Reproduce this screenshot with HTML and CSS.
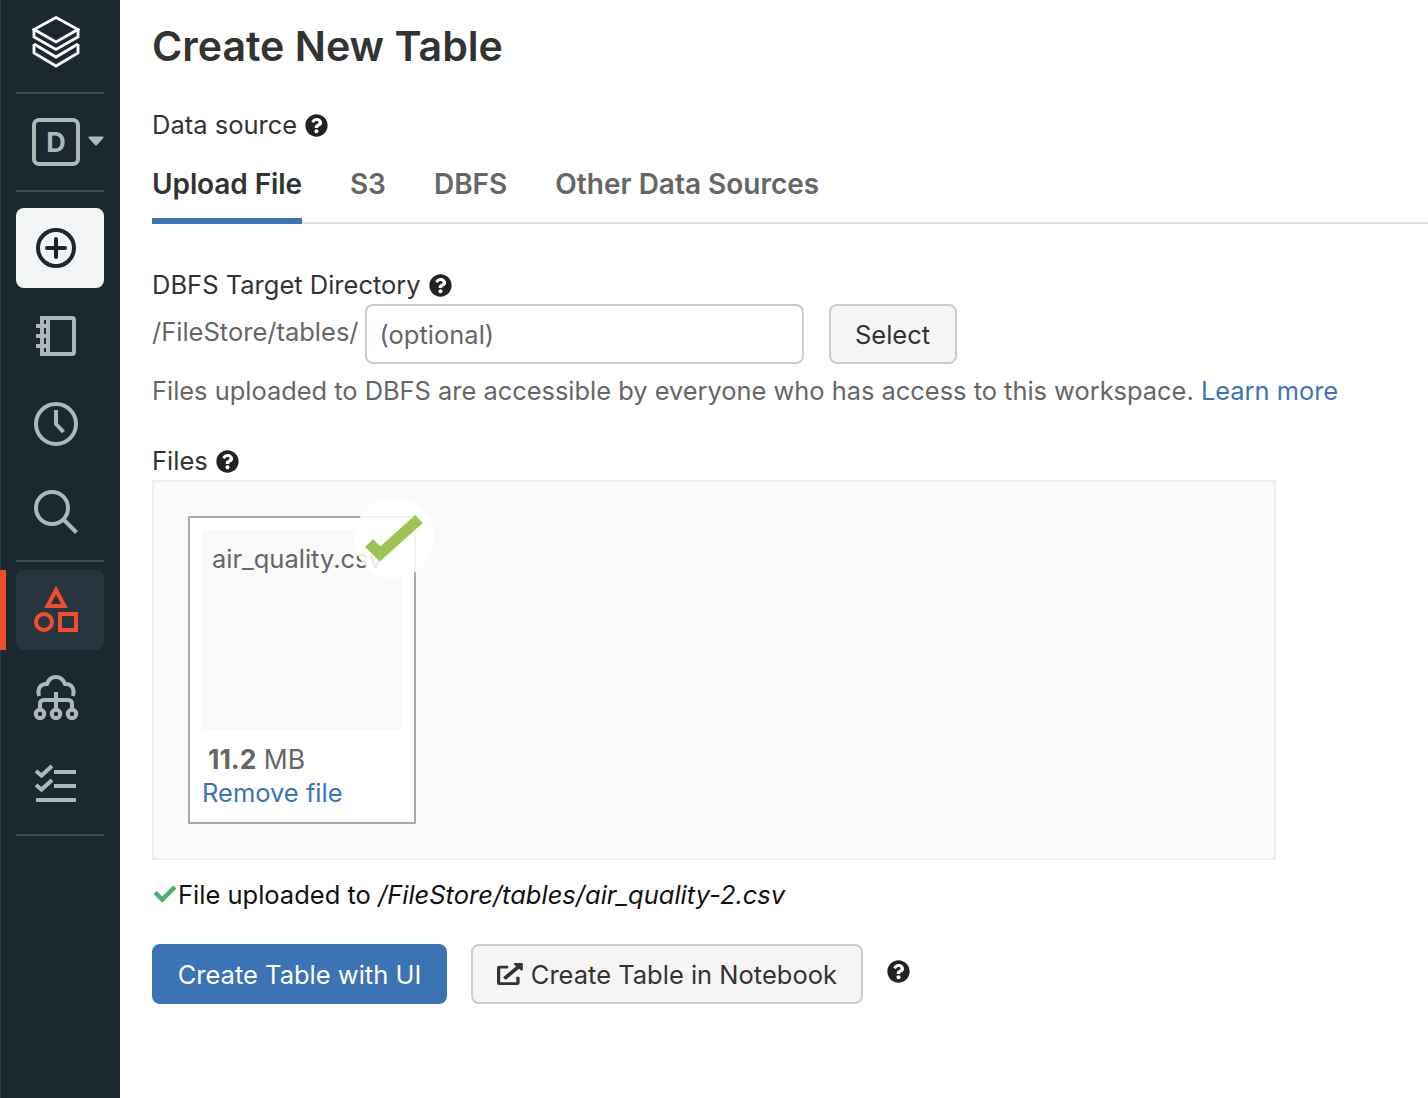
FILE: index.html
```html
<!DOCTYPE html>
<html lang="en">
<head>
  <meta charset="UTF-8">
  <meta name="viewport" content="width=device-width, initial-scale=1.0">
  <title>Create New Table</title>
  <link rel="stylesheet" href="styles.css">
</head>
<body>
  <nav class="sidebar">
    <div class="logo">
      <svg width="48" height="52" viewBox="0 0 48 52" fill="none" stroke="#fff" stroke-width="2.8">
        <path d="M24 1.5 L46 13.5 L24 26 L2 13.5 Z"/>
        <path d="M2 13.5 V21 L24 33.5 L46 21 V13.5"/>
        <path d="M2 28 L24 41 L46 28"/>
        <path d="M2 28 V37 L24 50 L46 37 V28"/>
      </svg>
    </div>
    <div class="divider"></div>
    <div class="workspace">
      <span class="workspace-badge">D</span>
      <svg class="caret" width="16" height="10" viewBox="0 0 16 10" fill="#adb8bd" stroke="#adb8bd" stroke-width="2" stroke-linejoin="round">
        <path d="M1.5 1.5 H14.5 L8 8.5 Z"/>
      </svg>
    </div>
    <div class="divider"></div>
    <div class="nav-item create">
      <svg width="48" height="48" viewBox="0 0 48 48" fill="none" stroke="#1b2830" stroke-width="4">
        <circle cx="24" cy="24" r="18"/>
        <path d="M24 15 V33 M15 24 H33" stroke-linecap="round"/>
      </svg>
    </div>
    <div class="nav-item">
      <svg width="48" height="48" viewBox="0 0 48 48" fill="none" stroke="#adb8bd" stroke-width="4">
        <path d="M10 6 H40 a2 2 0 0 1 2 2 V40 a2 2 0 0 1 -2 2 H10 Z"/>
        <path d="M16 6 V42"/>
        <path d="M4 14 H16 M4 24 H16 M4 34 H16"/>
      </svg>
    </div>
    <div class="nav-item">
      <svg width="48" height="48" viewBox="0 0 48 48" fill="none" stroke="#adb8bd" stroke-width="4">
        <circle cx="24" cy="24" r="20"/>
        <path d="M24 10 V24 L31.5 32"/>
      </svg>
    </div>
    <div class="nav-item">
      <svg width="48" height="48" viewBox="0 0 48 48" fill="none" stroke="#adb8bd" stroke-width="4">
        <circle cx="20" cy="20" r="16"/>
        <path d="M31.5 31.5 L44.5 44.5"/>
      </svg>
    </div>
    <div class="divider tight"></div>
    <div class="nav-item active">
      <svg width="48" height="48" viewBox="0 0 48 48" fill="none" stroke="#f04e2f" stroke-width="4">
        <path d="M24 4 L32.5 20 H15.5 Z"/>
        <circle cx="12" cy="36" r="8"/>
        <rect x="28" y="28" width="16" height="16"/>
      </svg>
    </div>
    <div class="nav-item">
      <svg width="48" height="48" viewBox="0 0 48 48" fill="none" stroke="#adb8bd" stroke-width="4">
        <path d="M7 22 C5 14 9 9.5 15 10 C17 4 21 3 24 3 C28 3 31 5 33 10 C39 9.5 43 14 41 22"/>
        <path d="M24 18 V34 M8 34 V30 Q8 26 12 26 H36 Q40 26 40 30 V34"/>
        <circle cx="8" cy="40" r="4.2"/>
        <circle cx="24" cy="40" r="4.2"/>
        <circle cx="40" cy="40" r="4.2"/>
      </svg>
    </div>
    <div class="nav-item">
      <svg width="48" height="48" viewBox="0 0 48 48" fill="none" stroke="#adb8bd" stroke-width="4">
        <path d="M4 9 L9.5 13.5 L20 4"/>
        <path d="M4 23 L9.5 27.5 L20 18"/>
        <path d="M22 10 H44 M22 24 H44 M4 38 H44"/>
      </svg>
    </div>
    <div class="divider tight"></div>
    <span class="active-bar"></span>
  </nav>

  <main class="content">
    <h1>Create New Table</h1>

    <div class="field-label source-label">Data source
      <svg class="help" viewBox="0 0 512 512"><use href="#help-icon"/></svg>
    </div>

    <div class="tabs">
      <a class="tab selected">Upload File</a>
      <a class="tab">S3</a>
      <a class="tab">DBFS</a>
      <a class="tab">Other Data Sources</a>
    </div>

    <div class="field-label target-label">DBFS Target Directory
      <svg class="help" viewBox="0 0 512 512"><use href="#help-icon"/></svg>
    </div>
    <div class="target-row">
      <span class="path-prefix">/FileStore/tables/</span>
      <input class="path-input" type="text" placeholder="(optional)">
      <button class="btn select-btn">Select</button>
    </div>
    <p class="note">Files uploaded to DBFS are accessible by everyone who has access to this workspace. <a href="#">Learn more</a></p>

    <div class="field-label files-label">Files
      <svg class="help" viewBox="0 0 512 512"><use href="#help-icon"/></svg>
    </div>
    <div class="dropzone">
      <div class="preview">
        <div class="thumb">air_quality.csv</div>
        <div class="size"><b>11.2</b> MB</div>
        <a class="remove" href="#">Remove file</a>
        <div class="tick">
          <svg width="60" height="48" viewBox="0 0 60 48" fill="none" stroke="#9bc553" stroke-width="11">
            <path d="M5 29 L16 40 L55 5"/>
          </svg>
        </div>
      </div>
    </div>

    <div class="success">
      <svg width="22" height="22" viewBox="0 0 512 512" fill="#4fae72">
        <path d="M173.898 439.404l-166.4-166.4c-9.997-9.997-9.997-26.206 0-36.204l36.203-36.204c9.997-9.998 26.207-9.998 36.204 0L192 312.69 432.095 72.596c9.997-9.997 26.207-9.997 36.204 0l36.203 36.204c9.997 9.997 9.997 26.206 0 36.204l-294.4 294.401c-9.998 9.997-26.207 9.997-36.204-.001z"/>
      </svg>
      <span>File uploaded to <em>/FileStore/tables/air_quality-2.csv</em></span>
    </div>

    <div class="actions">
      <button class="btn primary">Create Table with UI</button>
      <button class="btn notebook">
        <svg width="26" height="22" viewBox="0 0 512 512" preserveAspectRatio="none" fill="#333">
          <path d="M432,320H400a16,16,0,0,0-16,16V448H64V128H208a16,16,0,0,0,16-16V80a16,16,0,0,0-16-16H48A48,48,0,0,0,0,112V464a48,48,0,0,0,48,48H400a48,48,0,0,0,48-48V336A16,16,0,0,0,432,320ZM488,0h-128c-21.37,0-32.05,25.91-17,41l35.73,35.73L135,320.37a24,24,0,0,0,0,34L157.67,377a24,24,0,0,0,34,0L435.28,133.32,471,169c15,15,41,4.5,41-17V24A24,24,0,0,0,488,0Z"/>
        </svg>
        <span>Create Table in Notebook</span>
      </button>
      <svg class="help action-help" viewBox="0 0 512 512"><use href="#help-icon"/></svg>
    </div>
  </main>

  <svg class="defs" width="0" height="0">
    <symbol id="help-icon" viewBox="0 0 512 512">
      <path fill="#222" d="M504 256c0 136.997-111.043 248-248 248S8 392.997 8 256C8 119.083 119.043 8 256 8s248 111.083 248 248zM262.655 90c-54.497 0-89.255 22.957-116.549 63.758-3.536 5.286-2.353 12.415 2.715 16.258l34.699 26.31c5.205 3.947 12.621 3.008 16.665-2.122 17.864-22.658 30.113-35.797 57.303-35.797 20.429 0 45.698 13.148 45.698 32.958 0 14.976-12.363 22.667-32.534 33.976C247.128 238.528 216 254.941 216 296v4c0 6.627 5.373 12 12 12h56c6.627 0 12-5.373 12-12v-1.333c0-28.462 83.186-29.647 83.186-106.667 0-58.002-60.165-102-116.531-102zM256 338c-25.365 0-46 20.635-46 46 0 25.364 20.635 46 46 46s46-20.636 46-46c0-25.365-20.635-46-46-46z"/>
    </symbol>
  </svg>
</body>
</html>
```

FILE: styles.css
```css
* {
  box-sizing: border-box;
}

body {
  font-family: Inter, "Noto Sans", sans-serif;
  font-size: 25.5px;
  color: #333;
  background-color: #fff;
  margin: 0;
  display: flex;
  min-height: 1098px;
  overflow: hidden;
}

a {
  color: #3b73b5;
  text-decoration: none;
}

.defs {
  position: absolute;
}

/* left nav */
.sidebar {
  position: relative;
  flex: 0 0 120px;
  width: 120px;
  background-color: #1b2830;
  border-left: 1px solid #2b3b43;
  padding: 16px 16px 0 15px;
}

.logo {
  height: 52px;
  padding-left: 16px;
}

.logo svg {
  display: block;
}

.divider {
  height: 2px;
  background-color: #3c4a52;
  margin: 24px 0 0;
}

.divider.tight {
  margin: 0;
}

.workspace {
  display: flex;
  align-items: center;
  height: 96px;
  padding-left: 16px;
}

.workspace-badge {
  width: 48px;
  height: 48px;
  border: 4px solid #adb8bd;
  border-radius: 7px;
  color: #adb8bd;
  font-size: 27px;
  font-weight: 700;
  display: flex;
  align-items: center;
  justify-content: center;
}

.caret {
  margin-left: 8px;
  margin-top: -2px;
}

.workspace + .divider {
  margin: 0 0 16px;
}

.nav-item {
  height: 80px;
  margin-bottom: 8px;
  padding-left: 16px;
  border-radius: 8px;
  display: flex;
  align-items: center;
}

.nav-item.create {
  background-color: #f4f5f7;
}

.nav-item.active {
  background-color: #27353f;
}

.divider.tight + .nav-item {
  margin-top: 8px;
}

.active-bar {
  position: absolute;
  left: -1px;
  top: 570px;
  width: 6px;
  height: 80px;
  background-color: #f04e2f;
}

/* main panel */
.content {
  flex: 1;
  padding-left: 32px;
  min-width: 0;
}

h1 {
  font-size: 41.1px;
  font-weight: 600;
  line-height: 50px;
  color: #333;
  margin: 21px 0 0;
}

.field-label {
  height: 32px;
  line-height: 32px;
  display: flex;
  align-items: center;
  gap: 8px;
}

.source-label {
  margin-top: 38px;
}

.help {
  width: 23px;
  height: 23px;
}

.tabs {
  display: flex;
  gap: 48px;
  height: 76px;
  margin-top: 7px;
  border-bottom: 2px solid #dfe1e3;
}

.tab {
  font-size: 28px;
  font-weight: 600;
  color: #666;
  height: 76px;
  line-height: 72px;
  border-bottom: 6px solid transparent;
}

.tab.selected {
  color: #333;
  letter-spacing: -0.1px;
  border-bottom-color: #3b73b5;
}

.target-label {
  margin-top: 45px;
}

.target-row {
  display: flex;
  align-items: flex-start;
  margin-top: 3px;
  height: 60px;
}

.path-prefix {
  color: #666;
  line-height: 56px;
  margin-right: 6px;
}

.path-input {
  font: inherit;
  width: 439px;
  height: 60px;
  border: 2px solid #ccc;
  border-radius: 8px;
  padding: 0 13px;
  outline: none;
}

.path-input::placeholder {
  color: #666;
  opacity: 1;
}

.btn {
  font: inherit;
  height: 60px;
  border: 2px solid #ccc;
  border-radius: 8px;
  background-color: #f5f5f5;
  color: #333;
  padding: 0 24px;
}

.select-btn {
  margin-left: 25px;
  width: 128px;
}

.note {
  margin: 11px 0 0;
  font-size: 25.42px;
  line-height: 32px;
  color: #666;
  white-space: nowrap;
}

.files-label {
  margin-top: 38px;
}

.dropzone {
  width: 1124px;
  height: 380px;
  margin-top: 3px;
  padding: 34px;
  background-color: #fafafa;
  border: 2px solid #eee;
}

.preview {
  position: relative;
  width: 228px;
  height: 308px;
  padding: 12px;
  background-color: #fff;
  border: 2px solid #aaa;
}

.thumb {
  width: 200px;
  height: 200px;
  padding: 13px 10px;
  background-color: #fafafa;
  color: #666;
  line-height: 32px;
  white-space: nowrap;
}

.size {
  margin-top: 13px;
  padding-left: 6px;
  font-size: 26.5px;
  line-height: 32px;
  color: #666;
}

.remove {
  display: block;
  margin-top: 2px;
  line-height: 32px;
}

.tick {
  position: absolute;
  left: 164px;
  top: -20px;
  width: 80px;
  height: 80px;
  border-radius: 50%;
  background-color: rgba(255, 255, 255, 0.85);
  display: flex;
  align-items: center;
  justify-content: center;
}

.success {
  display: flex;
  align-items: center;
  gap: 2px;
  height: 32px;
  margin-top: 18px;
  padding-left: 2px;
  color: #111;
}

.actions {
  display: flex;
  align-items: center;
  gap: 24px;
  margin-top: 34px;
}

.primary {
  background-color: #3b73b5;
  border-color: #3b73b5;
  color: #fff;
  width: 295px;
  padding: 0;
}

.notebook {
  display: flex;
  align-items: center;
  gap: 8px;
  width: 392px;
  padding: 0 24px;
  white-space: nowrap;
}

.action-help {
  margin-top: -5px;
}
```
